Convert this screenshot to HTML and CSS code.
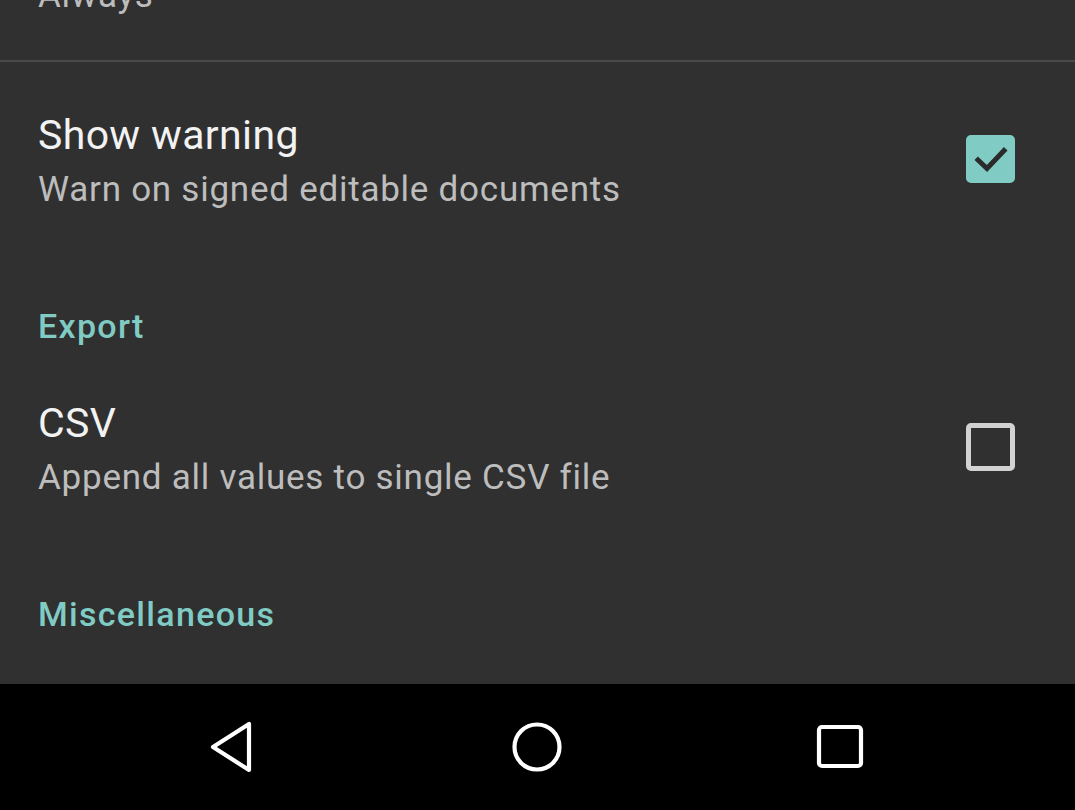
FILE: index.html
```html
<!DOCTYPE html>
<html>
<head>
<meta charset="utf-8">
<link rel="stylesheet" href="styles.css">
</head>
<body>
<div class="screen">
  <div class="settings">
    <div class="prev-item">
      <div class="summary prev-summary">Always</div>
    </div>
    <div class="divider"></div>

    <div class="pref">
      <div class="pref-text">
        <div class="title">Show warning</div>
        <div class="summary">Warn on signed editable documents</div>
      </div>
      <div class="checkbox checked">
        <svg viewBox="0 0 48 48" width="48" height="48"><path d="M11 25 L20 33.5 L37 15.5" fill="none" stroke="#2b2b2b" stroke-width="5" stroke-linecap="square"/></svg>
      </div>
    </div>

    <div class="category">Export</div>

    <div class="pref">
      <div class="pref-text">
        <div class="title">CSV</div>
        <div class="summary">Append all values to single CSV file</div>
      </div>
      <div class="checkbox"></div>
    </div>

    <div class="category">Miscellaneous</div>
  </div>

  <div class="navbar">
    <div class="nav-btn">
      <svg width="48" height="54" viewBox="0 0 48 54"><path d="M40 4 L40 50 L4 27 Z" fill="none" stroke="#fff" stroke-width="4.2" stroke-linejoin="round"/></svg>
    </div>
    <div class="nav-btn">
      <svg width="52" height="52" viewBox="0 0 52 52"><circle cx="26" cy="26" r="22.5" fill="none" stroke="#fff" stroke-width="4.2"/></svg>
    </div>
    <div class="nav-btn">
      <svg width="48" height="46" viewBox="0 0 48 46"><rect x="3" y="3" width="42" height="39" rx="3" fill="none" stroke="#fff" stroke-width="4.2"/></svg>
    </div>
  </div>
</div>
</body>
</html>
```

FILE: styles.css
```css
html, body {
  margin: 0;
  padding: 0;
}
body {
  background: #303030;
  font-family: Roboto, "Noto Sans", "Liberation Sans", sans-serif;
}
.screen {
  width: 1075px;
  height: 810px;
  display: flex;
  flex-direction: column;
  overflow: hidden;
}
.settings {
  flex: 1;
  display: flex;
  flex-direction: column;
  background: #303030;
}
.prev-item {
  height: 60px;
  padding-left: 38px;
  overflow: hidden;
}
.prev-summary {
  margin-top: -26px;
}
.divider {
  height: 2px;
  background: #4a4a4a;
}
.pref {
  display: flex;
  align-items: center;
  padding: 49px 60px 0 38px;
}
.pref-text {
  flex: 1;
  display: flex;
  flex-direction: column;
  gap: 9px;
}
.title {
  font-size: 41px;
  line-height: 48px;
  letter-spacing: 0.35px;
  color: #f2f2f2;
}
.summary {
  font-size: 35px;
  line-height: 44px;
  letter-spacing: 0.75px;
  color: #bdbdbd;
}
.checkbox {
  width: 49px;
  height: 48px;
  box-sizing: border-box;
  border: 5px solid #d2d2d2;
  border-radius: 5px;
  margin-top: -6px;
  display: flex;
  align-items: center;
  justify-content: center;
}
.checkbox.checked {
  background: #80cbc4;
  border-color: #80cbc4;
}
.checkbox svg {
  flex: none;
}
.category {
  font-size: 34px;
  line-height: 40px;
  font-weight: 500;
  letter-spacing: 1.3px;
  color: #80cbc4;
  padding-left: 38px;
  margin-top: 94px;
  margin-bottom: 4px;
}
.navbar {
  height: 126px;
  flex: none;
  background: #000;
  display: flex;
  align-items: center;
  justify-content: space-between;
  padding: 0 187px 0 185px;
}
.nav-btn {
  width: 96px;
  height: 96px;
  display: flex;
  align-items: center;
  justify-content: center;
}
```
